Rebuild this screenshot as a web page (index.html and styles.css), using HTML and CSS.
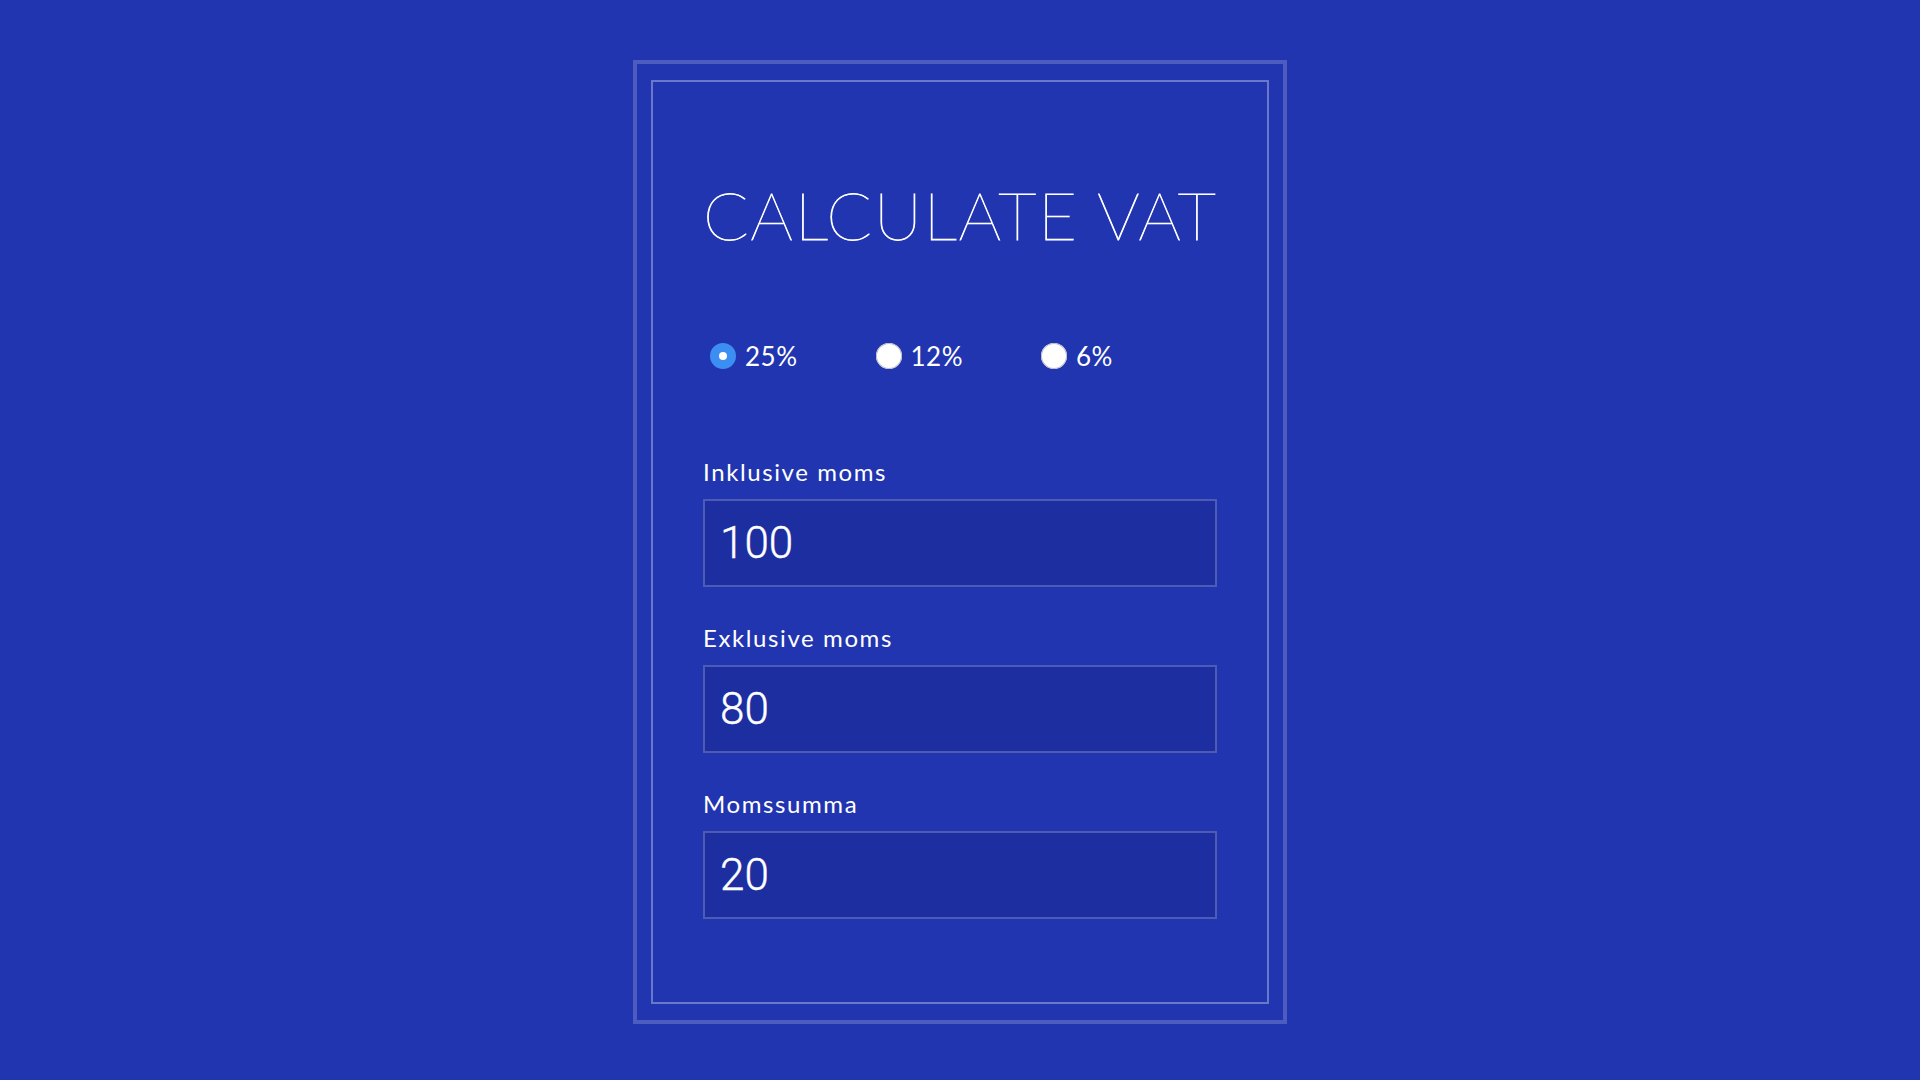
FILE: index.html
```html
<!DOCTYPE html>
<html lang="sv">
<head>
<meta charset="utf-8">
<title>Calculate VAT</title>
<link rel="stylesheet" href="styles.css">
</head>
<body>
<main class="page">
  <div class="frame">
    <section class="panel">
      <h1 class="title">CALCULATE VAT</h1>
      <div class="rates">
        <label class="rate"><input type="radio" name="rate" class="radio" checked><span>25%</span></label>
        <label class="rate"><input type="radio" name="rate" class="radio"><span>12%</span></label>
        <label class="rate"><input type="radio" name="rate" class="radio"><span>6%</span></label>
      </div>
      <div class="fields">
        <label class="field">
          <span class="field-label">Inklusive moms</span>
          <input class="field-input" type="text" value="100">
        </label>
        <label class="field">
          <span class="field-label">Exklusive moms</span>
          <input class="field-input" type="text" value="80">
        </label>
        <label class="field">
          <span class="field-label">Momssumma</span>
          <input class="field-input" type="text" value="20">
        </label>
      </div>
    </section>
  </div>
</main>
</body>
</html>
```
FILE: styles.css
```css
html, body {
  margin: 0;
  padding: 0;
}
body {
  background: #2135b0;
  font-family: "Lato", "Liberation Sans", sans-serif;
  color: #ffffff;
  min-height: 100vh;
}
.page {
  display: flex;
  justify-content: center;
  padding-top: 60px;
}
.frame {
  box-sizing: border-box;
  width: 654px;
  height: 964px;
  border: 4px solid rgba(255, 255, 255, 0.2);
  padding: 16px 14px;
}
.panel {
  box-sizing: border-box;
  height: 924px;
  border: 2px solid rgba(255, 255, 255, 0.33);
  padding: 0 0 0 50px;
}
.title {
  margin: 92px 0 0 0;
  font-family: "Lato", sans-serif;
  font-weight: 100;
  font-size: 67px;
  line-height: 1.2;
  letter-spacing: 1.6px;
  -webkit-text-stroke: 0.8px #ffffff;
}
.rates {
  display: flex;
  gap: 78px;
  margin-top: 86px;
  padding-left: 7px;
}
.rate {
  display: flex;
  align-items: center;
  gap: 9px;
  font-size: 26px;
  letter-spacing: 0.5px;
}
.radio {
  appearance: none;
  -webkit-appearance: none;
  margin: 0;
  width: 26px;
  height: 26px;
  border-radius: 50%;
  background: #ffffff;
  box-shadow: inset 0 0 0 1px #b9bcc8;
  position: relative;
}
.radio:checked {
  background: #3d8ef2;
  box-shadow: none;
}
.radio:checked::after {
  content: "";
  position: absolute;
  left: 9px;
  top: 9px;
  width: 8px;
  height: 8px;
  border-radius: 50%;
  background: #ffffff;
}
.fields {
  display: flex;
  flex-direction: column;
  gap: 34px;
  margin-top: 83px;
}
.field {
  display: flex;
  flex-direction: column;
  gap: 10px;
}
.field-label {
  font-size: 24px;
  letter-spacing: 1.6px;
  line-height: 34px;
}
.field-input {
  box-sizing: border-box;
  width: 514px;
  height: 88px;
  margin: 0;
  border: 2px solid rgba(255, 255, 255, 0.22);
  background: #1c2ea0;
  color: #ffffff;
  font-family: "Roboto", sans-serif;
  font-weight: 300;
  font-size: 44px;
  -webkit-text-stroke: 0.4px #ffffff;
  padding: 0 0 0 15px;
  outline: none;
}
```
